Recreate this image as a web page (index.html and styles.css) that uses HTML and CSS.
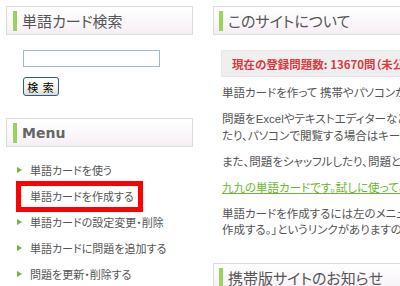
FILE: index.html
```html
<!DOCTYPE html>
<html lang="ja">
<head>
    <meta charset="UTF-8">
    <meta name="viewport" content="width=device-width, initial-scale=1.0">
    <title>単語カード</title>
    <link rel="stylesheet" href="styles.css">
</head>
<body>
    <div class="page">
        <!-- Sidebar -->
        <div class="side">
            <h2 class="box-title"><span>単語カード検索</span></h2>
            <form class="search">
                <input type="text" name="q">
                <button type="submit">検&nbsp;索</button>
            </form>

            <h2 class="box-title menu-title"><span>Menu</span></h2>
            <ul class="menu">
                <li><a href="#">単語カードを使う</a></li>
                <li class="marked"><a href="#">単語カードを作成する</a></li>
                <li><a href="#">単語カードの設定変更・削除</a></li>
                <li><a href="#">単語カードに問題を追加する</a></li>
                <li><a href="#">問題を更新・削除する</a></li>
            </ul>
        </div>

        <!-- Main -->
        <div class="main">
            <h2 class="box-title"><span>このサイトについて</span></h2>
            <div class="notice">現在の登録問題数: 13670問（未公開を含む）</div>
            <p>単語カードを作って 携帯やパソコンから利用することができます。</p>
            <p>問題を<span class="latin">Excel</span>やテキストエディターなどで作成してアップロードすることもできます。<br>たり、パソコンで閲覧する場合はキーボードで操作することもできます。</p>
            <p>また、問題をシャッフルしたり、問題と答えを入れ替えたりすることもできます。</p>
            <p><a class="green" href="#">九九の単語カードです。試しに使ってみてください。</a></p>
            <p>単語カードを作成するには左のメニューから「単語カードを<br>作成する。」というリンクがありますのでそちらからどうぞ。</p>
            <h2 class="box-title news-title"><span>携帯版サイトのお知らせ</span></h2>
        </div>
    </div>
</body>
</html>
```

FILE: styles.css
```css
html, body {
    margin: 0;
    overflow: hidden;
}
body {
    font-family: "Noto Sans CJK JP", sans-serif;
    font-feature-settings: "palt";
    color: #555;
    font-size: 12px;
    background: #fff;
}
.page {
    display: flex;
    gap: 20px;
    padding: 6px 0 0 6px;
    width: 700px;
}
.side {
    width: 187px;
    flex: none;
}
.main {
    width: 460px;
    flex: none;
}
.box-title {
    margin: 0;
    height: 29px;
    box-sizing: border-box;
    border: 1px solid #dcdcdc;
    padding: 4px 6px 3px;
    background: linear-gradient(#ffffff, #fbf9fb 45%, #f6eff6);
    font-size: 15px;
    font-weight: normal;
    color: #555;
}
.box-title span {
    display: block;
    height: 20px;
    line-height: 20px;
    border-left: 4px solid #9cd35c;
    padding-left: 5px;
}
.main .box-title {
    width: 460px;
    border-right: none;
    padding-left: 5px;
}
.menu-title {
    margin-top: 22px;
    font-family: "DejaVu Sans", sans-serif;
    font-weight: bold;
    font-size: 14px;
    color: #666;
}
.search {
    margin: 15px 0 0 17px;
}
.search input {
    display: block;
    width: 137px;
    height: 17px;
    box-sizing: border-box;
    border: 1px solid #9fb7d3;
    padding: 0 2px;
    margin: 0;
}
.search button {
    display: block;
    margin-top: 10px;
    width: 36px;
    height: 19px;
    padding: 0;
    border: 1px solid #2c5a96;
    border-radius: 3px;
    background: linear-gradient(#ffffff, #f3f2ec 60%, #dedbcf);
    font-family: "Noto Sans CJK JP", sans-serif;
    font-feature-settings: normal;
    font-size: 11px;
    letter-spacing: 1px;
    line-height: 16px;
    color: #000;
}
.menu {
    list-style: none;
    margin: 0;
    padding: 10px 0 0;
}
.menu li {
    position: relative;
    height: 26px;
    line-height: 26px;
    padding-left: 24px;
    font-size: 11px;
}
.menu li::before {
    content: "";
    position: absolute;
    left: 11px;
    top: 10px;
    border-left: 5px solid #77b43c;
    border-top: 3px solid transparent;
    border-bottom: 3px solid transparent;
}
.menu a {
    color: #555;
    text-decoration: none;
}
/* highlight marker drawn over the item */
.menu li.marked::after {
    content: "";
    position: absolute;
    left: 10px;
    top: -2px;
    width: 127px;
    height: 31px;
    box-sizing: border-box;
    border: 5px solid #ff0000;
}
.notice {
    margin: 15px 0 7px 8px;
    height: 27px;
    line-height: 27px;
    padding: 0 10px;
    background: #efefef;
    border: 1px solid #e8e8e8;
    box-sizing: border-box;
    color: #dc3a40;
    font-weight: bold;
    font-size: 11.5px;
    white-space: nowrap;
}
.main p {
    margin: 0 0 10px 9px;
    line-height: 16px;
    font-size: 11.5px;
    white-space: nowrap;
}
.latin {
    font-family: "Liberation Sans", sans-serif;
}
a.green {
    color: #6cb52e;
    text-decoration: underline;
}
.news-title {
    margin-top: 26px;
}
```
